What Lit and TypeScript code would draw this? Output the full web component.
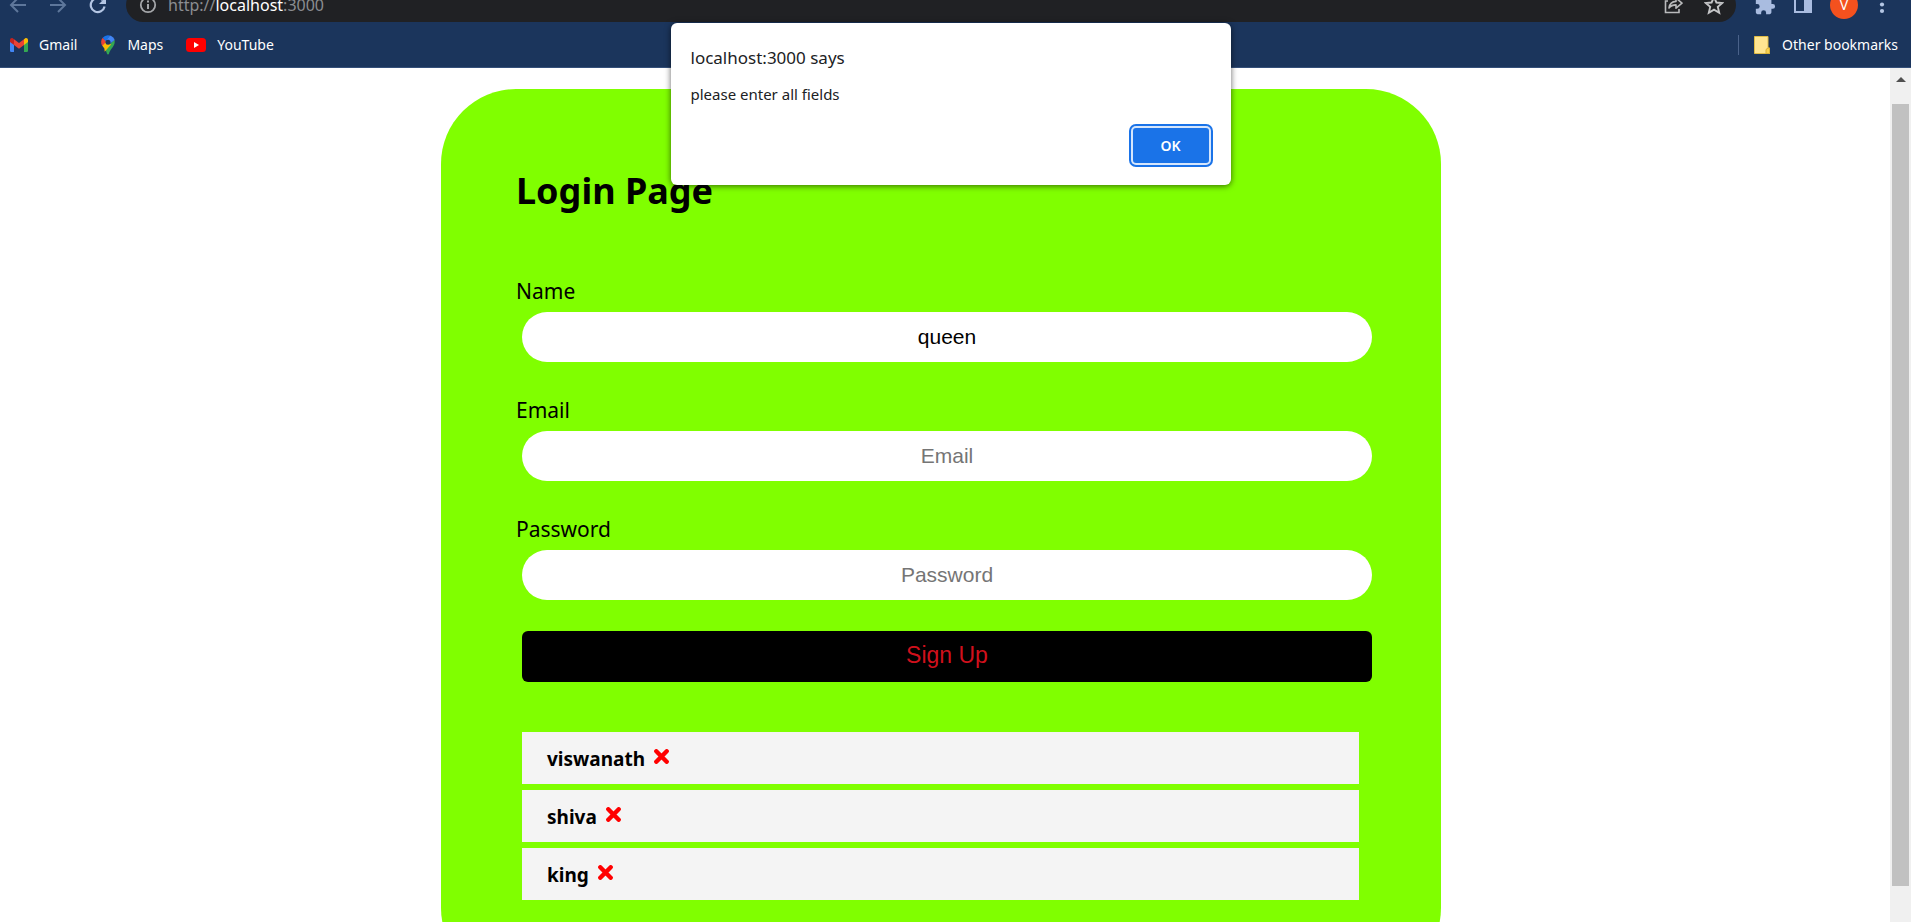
import { LitElement, html, css, svg } from "lit";
import { customElement, state } from "lit/decorators.js";

const backArrow = svg`<path d="M17 9H2M9 2L2 9l7 7" fill="none" stroke="#5e779b" stroke-width="2"/>`;
const forwardArrow = svg`<path d="M1 9h15M9 2l7 7-7 7" fill="none" stroke="#5e779b" stroke-width="2"/>`;

@customElement("browser-chrome")
class BrowserChrome extends LitElement {
  static styles = css`
    :host {
      display: block;
      background: #1b355c;
      border-bottom: 1px solid #35507a;
      font-family: "Noto Sans", sans-serif;
      color: #fff;
    }
    .toolbar {
      display: flex;
      align-items: flex-end;
      height: 22px;
      overflow: hidden;
    }
    .group {
      display: flex;
      align-items: center;
      height: 34px;
      flex: none;
    }
    .nav {
      gap: 22px;
      padding: 0 19px 0 9px;
    }
    .tools {
      gap: 18px;
      padding: 0 17px 0 18px;
    }
    .address {
      display: flex;
      align-items: center;
      flex: 1;
      height: 34px;
      border-radius: 17px;
      background: #202124;
      padding: 0 12px 0 13px;
      gap: 11px;
      box-sizing: border-box;
    }
    .url {
      flex: 1;
      font-size: 16px;
      line-height: 22px;
      color: #8b8d91;
    }
    .host {
      color: #fff;
    }
    .icon {
      display: block;
      background: none;
      border: 0;
      padding: 0;
      flex: none;
    }
    .icon svg,
    .bookmark svg {
      display: block;
    }
    .address .icon + .icon {
      margin-left: 9px;
    }
    .avatar {
      width: 28px;
      height: 28px;
      border: 0;
      border-radius: 50%;
      padding: 0;
      background: #f4511e;
      color: #fff;
      font: 14px/28px "Noto Sans", sans-serif;
    }
    .bookmarks {
      display: flex;
      align-items: center;
      height: 45px;
      padding: 0 13px 0 10px;
      gap: 23px;
    }
    .bookmark {
      display: flex;
      align-items: center;
      gap: 11px;
      color: #fff;
      text-decoration: none;
      font-size: 14px;
      line-height: 20px;
    }
    .other {
      margin-left: auto;
      padding-left: 15px;
      border-left: 1px solid #4a628a;
      gap: 12px;
    }
  `;

  render() {
    return html`
      <div class="toolbar">
        <div class="group nav">
          <button class="icon" aria-label="Back">
            <svg width="18" height="18" viewBox="0 0 18 18">${backArrow}</svg>
          </button>
          <button class="icon" aria-label="Forward">
            <svg width="18" height="18" viewBox="0 0 18 18">${forwardArrow}</svg>
          </button>
          <button class="icon" aria-label="Reload">
            <svg width="18" height="18" viewBox="0 0 18 18">
              <path d="M15.6 10.6A7 7 0 1 1 13.8 4.2" fill="none" stroke="#b4c6e4" stroke-width="2.2" />
              <path d="M17 1v7h-7z" fill="#b4c6e4" />
            </svg>
          </button>
        </div>
        <div class="address">
          <button class="icon" aria-label="Site information">
            <svg width="18" height="18" viewBox="0 0 18 18">
              <circle cx="9" cy="9" r="7.2" fill="none" stroke="#a5a7aa" stroke-width="1.8" />
              <path d="M9 8v5M9 4.6v2" stroke="#a5a7aa" stroke-width="2" />
            </svg>
          </button>
          <span class="url">http://<span class="host">localhost</span>:3000</span>
          <button class="icon" aria-label="Share">
            <svg width="20" height="20" viewBox="0 0 20 20" fill="none" stroke="#b9babc" stroke-width="1.6">
              <path d="M4 6H1.5v11.500H15V14" />
              <path d="M5 13c.7-4.500 3.500-6.500 7-6.600V3l6 5.200-6 5v-3.300c-3 0-5.200.8-7 3.100z" stroke-linejoin="round" />
            </svg>
          </button>
          <button class="icon" aria-label="Bookmark">
            <svg width="20" height="20" viewBox="0 0 20 20">
              <path d="M10 2l2.400 5.500 5.900.5-4.500 3.900 1.400 5.800L10 14.600l-5.200 3.100 1.400-5.800L1.700 8l5.900-.5z" fill="none" stroke="#c4c5c7" stroke-width="1.900" />
            </svg>
          </button>
        </div>
        <div class="group tools">
          <button class="icon" aria-label="Extensions">
            <svg width="22" height="22" viewBox="0 0 24 24">
              <path fill="#a9bce0" d="M20.500 11H19V7c0-1.100-.9-2-2-2h-4V3.500a2.500 2.500 0 0 0-5 0V5H4c-1.100 0-2 .9-2 2v3.800h1.500a2.700 2.700 0 0 1 0 5.400H2V20c0 1.100.9 2 2 2h3.800v-1.500a2.700 2.700 0 0 1 5.400 0V22H17c1.100 0 2-.9 2-2v-4h1.500a2.500 2.500 0 0 0 0-5z" />
            </svg>
          </button>
          <button class="icon" aria-label="Side panel">
            <svg width="18" height="18" viewBox="0 0 18 18">
              <path fill="#a9bce0" fill-rule="evenodd" d="M0 0h18v17H0zM2 2v13h8V2z" />
            </svg>
          </button>
          <button class="avatar" aria-label="Profile">V</button>
          <button class="icon" aria-label="Menu">
            <svg width="18" height="18" viewBox="0 0 18 18" fill="#b4c6e4">
              <circle cx="6" cy="2" r="2.100" /><circle cx="6" cy="8.500" r="2.100" /><circle cx="6" cy="15" r="2.100" />
            </svg>
          </button>
        </div>
      </div>
      <nav class="bookmarks">
        <a class="bookmark" href="#">
          <svg width="18" height="14" viewBox="0 0 18 14">
            <path fill="#4285f4" d="M0 3l4 3v8H1.200A1.200 1.200 0 0 1 0 12.800z" />
            <path fill="#34a853" d="M18 3l-4 3v8h2.800a1.200 1.200 0 0 0 1.200-1.200z" />
            <path fill="#fbbc04" d="M14 1.200l1-.8c1.300-.9 3 0 3 1.600v2L14 7z" />
            <path fill="#ea4335" d="M4 1.200l5 3.800 5-3.800V7l-5 3.800L4 7z" />
            <path fill="#c5221f" d="M4 1.200L3 .4C1.700-.5 0 .4 0 2v2l4 3z" />
          </svg>
          Gmail
        </a>
        <a class="bookmark" href="#">
          <svg width="16" height="20" viewBox="0 0 16 20">
            <path fill="#34a853" d="M14.500 4.800c.7 3.200-.2 5.400-2.200 7.900-1.800 2.300-2.700 3.600-3.300 6-.3 1-1.700 1-2 0-.5-2-1.300-3.400-2.500-5z" />
            <path fill="#fbbc04" d="M2 10.200l3.500-4L11 9.500l-6.300 7.300-.3-3.400C3.500 12.300 2.500 11.300 2 10.200z" />
            <path fill="#ea4335" d="M2.700 2.800l4 3.400L2.200 11C.6 8 .8 5 2.700 2.800z" />
            <path fill="#1a73e8" d="M2.700 2.800A6.900 6.900 0 0 1 10 .5L5.800 6.200z" />
            <path fill="#4285f4" d="M10 .5c2.300.7 3.900 2.300 4.600 4.500L9.500 9 6.200 5.200z" />
            <circle cx="8" cy="7.200" r="2.500" fill="#1b355c" />
          </svg>
          Maps
        </a>
        <a class="bookmark" href="#">
          <svg width="20" height="14" viewBox="0 0 20 14">
            <rect width="20" height="14" rx="3.500" fill="#f00" />
            <path d="M8 4l5 3-5 3z" fill="#fff" />
          </svg>
          YouTube
        </a>
        <a class="bookmark other" href="#">
          <svg width="16" height="20" viewBox="0 0 16 20">
            <path d="M.5 1.500h13.500v11.500h1.500V18.500H.5z" fill="#ffe591" stroke="#e0bc46" />
            <path d="M12 18.500v-4l2-1.500h1.500v5.500z" fill="#f8d04e" stroke="#d9b036" />
          </svg>
          Other bookmarks
        </a>
      </nav>
    `;
  }
}

@customElement("alert-dialog")
class AlertDialog extends LitElement {
  static styles = css`
    :host {
      position: absolute;
      top: 23px;
      left: 50%;
      margin-left: -285px;
      z-index: 2;
    }
    .box {
      box-sizing: border-box;
      width: 560px;
      padding: 22px 20px;
      border-radius: 6px;
      background: #fff;
      color: #202124;
      font-family: "Noto Sans", sans-serif;
      box-shadow: 0 1px 6px rgba(0, 0, 0, 0.6);
      display: flex;
      flex-direction: column;
    }
    .title {
      margin: 0 0 12px;
      font-size: 17px;
      font-weight: 400;
      line-height: 26px;
    }
    .message {
      margin: 0 0 23px;
      font-size: 15px;
      line-height: 22px;
    }
    .ok {
      align-self: flex-end;
      margin-right: 2px;
      width: 76px;
      height: 35px;
      border: 0;
      border-radius: 3px;
      background: #1a73e8;
      color: #fff;
      font: 600 14px/20px "Noto Sans", sans-serif;
      box-shadow: 0 0 0 2px #d6e6fc, 0 0 0 4px #1a73e8;
    }
  `;

  render() {
    return html`
      <div class="box" role="alertdialog" aria-labelledby="title" aria-describedby="message">
        <h2 class="title" id="title">localhost:3000 says</h2>
        <p class="message" id="message">please enter all fields</p>
        <button class="ok">OK</button>
      </div>
    `;
  }
}

@customElement("login-card")
class LoginCard extends LitElement {
  @state() users = ["viswanath", "shiva", "king"];

  static styles = css`
    :host {
      display: block;
      box-sizing: border-box;
      width: 1000px;
      max-width: 100%;
      padding: 75px 75px 83px;
      border-radius: 75px;
      background: #80ff00;
      color: #000;
      font-family: "Noto Sans", sans-serif;
    }
    .heading {
      margin: 0 0 58px;
      font-size: 36px;
      font-weight: 700;
      line-height: 54px;
    }
    .field {
      display: flex;
      flex-direction: column;
      margin-bottom: 33px;
    }
    .label {
      font-size: 21px;
      line-height: 30px;
      margin-bottom: 6px;
    }
    .input,
    .submit {
      box-sizing: border-box;
      height: 50px;
      margin: 0 -6px 0 6px;
      border: 0;
      font-family: "Liberation Sans", Arial, sans-serif;
      text-align: center;
    }
    .input {
      padding: 0 20px;
      border-radius: 25px;
      background: #fff;
      color: #000;
      font-size: 21px;
    }
    .input::placeholder {
      color: #757575;
    }
    .form {
      display: flex;
      flex-direction: column;
    }
    .submit {
      height: 51px;
      margin-top: -2px;
      border-radius: 6px;
      background: #000;
      color: #d0101c;
      font-size: 23px;
      padding: 0 0 3px;
    }
    .users {
      list-style: none;
      margin: 50px 7px 0 6px;
      padding: 0;
      display: flex;
      flex-direction: column;
      gap: 6px;
    }
    .user {
      display: flex;
      align-items: center;
      gap: 9px;
      box-sizing: border-box;
      height: 52px;
      padding: 2px 25px 0;
      background: #f4f4f4;
      font-size: 19px;
      font-weight: 700;
      line-height: 28px;
    }
    .remove {
      border: 0;
      padding: 0 0 6px;
      background: none;
    }
    .remove svg {
      display: block;
    }
  `;

  remove(name: string) {
    this.users = this.users.filter((user) => user !== name);
  }

  field(id: string, label: string, type: string, value = "") {
    return html`
      <div class="field">
        <label class="label" for=${id}>${label}</label>
        <input class="input" id=${id} type=${type} placeholder=${label} .value=${value} />
      </div>
    `;
  }

  render() {
    return html`
      <h1 class="heading">Login Page</h1>
      <form class="form" @submit=${(e: Event) => e.preventDefault()}>
        ${this.field("name", "Name", "text", "queen")} ${this.field("email", "Email", "email")}
        ${this.field("password", "Password", "password")}
        <button class="submit">Sign Up</button>
      </form>
      <ul class="users">
        ${this.users.map(
          (user) => html`
            <li class="user">
              <span>${user}</span>
              <button class="remove" aria-label="Remove ${user}" @click=${() => this.remove(user)}>
                <svg width="15" height="15" viewBox="0 0 15 15">
                  <path d="M2.300 2.300l10.400 10.400M12.700 2.300L2.300 12.700" stroke="#f00" stroke-width="4.400" stroke-linecap="round" />
                </svg>
              </button>
            </li>
          `
        )}
      </ul>
    `;
  }
}

@customElement("app-root")
class AppRoot extends LitElement {
  static styles = css`
    :host {
      display: flex;
      flex-direction: column;
      position: relative;
      height: 100vh;
      overflow: hidden;
      background: #fff;
    }
    .viewport {
      display: flex;
      flex: 1;
      min-height: 0;
    }
    .page {
      flex: 1;
      overflow: hidden;
      padding: 21px 8px 0 0;
    }
    .card {
      margin: 0 auto;
    }
    .scrollbar {
      display: flex;
      flex-direction: column;
      box-sizing: border-box;
      width: 21px;
      padding: 0 2px;
      background: #f0f0f0;
    }
    .up {
      display: flex;
      justify-content: center;
      padding: 8px 0 22px;
    }
    .thumb {
      flex: 22;
      background: #c1c1c1;
    }
    .rest {
      flex: 1;
    }
  `;

  render() {
    return html`
      <browser-chrome></browser-chrome>
      <div class="viewport">
        <main class="page"><login-card class="card"></login-card></main>
        <div class="scrollbar">
          <div class="up">
            <svg width="10" height="6" viewBox="0 0 10 6"><path d="M0 6l5-5 5 5z" fill="#505050" /></svg>
          </div>
          <div class="thumb"></div>
          <div class="rest"></div>
        </div>
      </div>
      <alert-dialog></alert-dialog>
    `;
  }
}
